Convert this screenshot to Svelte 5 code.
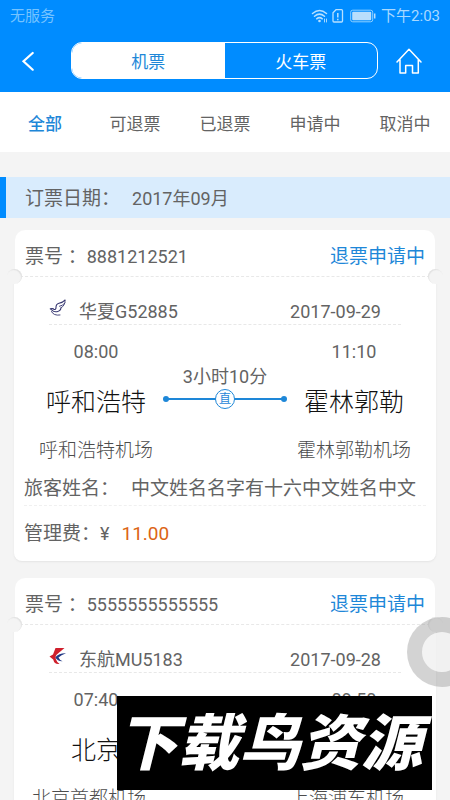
<script>
  let mode = $state('plane');
  let filter = $state('全部');
  const filters = ['全部', '可退票', '已退票', '申请中', '取消中'];
  const tickets = [
    {
      no: '8881212521', status: '退票申请中', logo: 'huaxia', flight: '华夏G52885', date: '2017-09-29',
      from: { time: '08:00', city: '呼和浩特', airport: '呼和浩特机场' },
      to: { time: '11:10', city: '霍林郭勒', airport: '霍林郭勒机场' },
      duration: '3小时10分', passenger: '中文姓名名字有十六中文姓名中文', fee: '11.00'
    },
    {
      no: '5555555555555', status: '退票申请中', logo: 'eastern', flight: '东航MU5183', date: '2017-09-28',
      from: { time: '07:40', city: '北京', airport: '北京首都机场   ' },
      to: { time: '09:50', city: '', airport: '上海浦东机场   ' }
    }
  ];
</script>

{#snippet stop(s)}
  <div class="stop">
    <span class="time">{s.time}</span>
    <span class="city">{s.city}</span>
    <span class="airport">{s.airport}</span>
  </div>
{/snippet}

<div class="app">
  <header>
    <div class="status">
      <span>无服务</span>
      <div class="signals">
        <svg width="18" height="16" viewBox="0 0 18 16" fill="none" stroke="#b8e0ff" stroke-width="1.5" stroke-linecap="round">
          <path d="M1.500 5.500Q8.500 -.5 15.500 5.500M3.500 8.200Q8.500 4 13.500 8.200M5.700 10.800Q8.500 8.500 11.300 10.800" />
          <circle cx="8.500" cy="13" r="1.300" fill="#b8e0ff" stroke="none" />
          <path d="M13.500 11v3M15.500 14v-3" stroke-width=".9" />
        </svg>
        <svg width="12" height="16" viewBox="0 0 12 16" fill="none" stroke="#b8e0ff" stroke-width="1.300">
          <path d="M4 1.700H9.500Q10.500 1.700 10.500 2.700V13Q10.500 14 9.500 14H2Q1 14 1 13V4.700Z" />
          <path d="M5.800 5v4.500M5.800 10.800v1.400" stroke-width="1.500" />
        </svg>
        <svg class="battery" width="26" height="14" viewBox="0 0 26 14">
          <rect x=".7" y="1.200" width="22" height="11.600" rx="2" fill="none" stroke="#8fd0ff" />
          <rect x="2.200" y="2.700" width="19" height="8.600" rx="1" fill="#b9defc" />
          <path d="M24.700 4.500v5" stroke="#b9defc" stroke-width="1.500" />
        </svg>
        <span>下午2:03</span>
      </div>
    </div>
    <div class="nav">
      <button class="icon" aria-label="返回">
        <svg width="14" height="20" viewBox="0 0 14 20" fill="none" stroke="#fff" stroke-width="2.200" stroke-linecap="round"><path d="M11.700 2L2.500 10.300L11.700 18.700" /></svg>
      </button>
      <div class="segment">
        <button class:on={mode === 'plane'} onclick={() => (mode = 'plane')}>机票</button>
        <button class:on={mode === 'train'} onclick={() => (mode = 'train')}>火车票</button>
      </div>
      <button class="icon home" aria-label="首页">
        <svg width="26" height="26" viewBox="0 0 26 26" fill="none" stroke="#fff" stroke-width="1.500" stroke-linejoin="round" stroke-linecap="round"><path d="M1 14L13 1.200L25 14M4 11.500V25H9.700V17.500H16.500V25H22.300V11.500" /></svg>
      </button>
    </div>
  </header>

  <nav class="filters">
    {#each filters as f}
      <button class:on={filter === f} onclick={() => (filter = f)}>{f}</button>
    {/each}
  </nav>

  <main>
    <div class="month"><span class="cjk">订票日期：</span><span>2017年09月</span></div>
    {#each tickets as t}
      <article>
        <div class="head">
          <span class="cjk">票号 ：</span><span>{t.no}</span>
          <a href="#refund">{t.status}</a>
        </div>
        <div class="body">
          <div class="airline">
            {#if t.logo === 'huaxia'}
              <svg width="18" height="18" viewBox="0 0 18 18" fill="none" stroke="#34346f" stroke-linecap="round" stroke-linejoin="round">
                <path d="M16 1.200Q14 3.500 10 4.200Q6.800 5.200 7 8.500Q7 10.800 5 10.500Q4.300 9 1.300 9.800L3 11Q4.500 13.200 8 12.700Q11.700 12 12 8.800" stroke-width="1.100" />
                <path d="M16 1.200Q16.500 6.500 12 8.800M10.500 7.300Q14 6.800 15.800 4M2.500 12.500Q4.500 17 11 16" stroke-width=".9" />
              </svg>
            {:else}
              <svg width="18" height="18" viewBox="0 0 18 18">
                <path d="M6.500 1H15.500L9 6.500Q5.500 9 7 12.500Q8 15.500 10.500 17Q5.500 17.800 4.200 12.500L.5 9.500L4 7.500Z" fill="#cf1f2c" />
                <path d="M17 6.300Q10 6 6.300 10.200Q8.500 14.500 13.500 14.300Q10.500 13 9.500 10.500Q12 8 17 6.300Z" fill="#233a86" />
              </svg>
            {/if}
            <span>{t.flight}</span>
            <time>{t.date}</time>
          </div>
          <div class="route">
            {@render stop(t.from)}
            <div class="leg">
              {#if t.duration}
                <span>{t.duration}</span>
                <div class="line"><i></i><b>直</b><i></i></div>
              {/if}
            </div>
            {@render stop(t.to)}
          </div>
          {#if t.passenger}
            <div class="person"><span>旅客姓名：</span><span>{t.passenger}</span></div>
            <div class="fee"><span class="cjk">管理费：</span><span>¥</span><strong>{t.fee}</strong></div>
          {/if}
        </div>
      </article>
    {/each}
  </main>

  <button class="assist" aria-label="悬浮按钮"></button>
  <div class="banner">下载鸟资源</div>
</div>

<style>
  :global(body) { margin: 0; }
  .app {
    position: relative; height: 100vh; overflow: hidden; background: #f4f4f4; color: #636363;
    font: 18px/26px Roboto, "Noto Sans CJK SC", sans-serif;
  }
  button { border: 0; padding: 0; background: none; font: inherit; color: inherit; }
  svg { display: block; flex: none; }
  header { background: #008cff; color: #fff; padding-bottom: 13px; }
  .status { display: flex; justify-content: space-between; align-items: center; height: 32px; padding: 0 10px; font-size: 15px; color: #a9d9ff; }
  .status > span { color: #75c3ff; }
  .signals { display: flex; align-items: center; gap: 3px; }
  .battery { margin: 0 2px 0 3px; }
  .nav { display: flex; align-items: center; height: 37px; margin-top: 10px; }
  .icon { display: flex; justify-content: center; width: 55px; }
  .nav .home { width: 62px; margin-right: 10px; }
  .segment { flex: 1; display: flex; box-sizing: border-box; height: 37px; margin-left: 16px; border: 1px solid #fff; border-radius: 11px; overflow: hidden; }
  .segment button { flex: 1; padding-top: 3px; font-size: 17px; }
  .segment .on { background: #fff; color: #1e87d8; }
  .filters { display: flex; justify-content: space-between; height: 60px; background: #fff; }
  .filters button { width: 90px; padding-top: 3px; font-size: 17px; }
  .filters .on { color: #1e87d8; font-weight: 500; }
  .cjk { font-size: 19px; }
  .month { display: flex; align-items: center; gap: 12px; box-sizing: border-box; height: 41px; margin: 25px 0 12px; padding: 3px 0 0 19px; border-left: 6px solid #008cff; background: #d9ecfd; }
  article { margin: 0 14px 17px; }
  .head { position: relative; display: flex; align-items: center; height: 47px; margin: 0 1px; padding: 8px 10px 0; box-sizing: border-box; background: #fff; border-radius: 10px 10px 0 0; border-bottom: 1px dashed #e8e8e8; white-space: pre; }
  .head::before, .head::after { content: ""; position: absolute; z-index: 1; bottom: -8px; width: 15px; height: 15px; border-radius: 50%; background: #f4f4f4; }
  .head::before { left: -8px; box-shadow: inset -1px 1px 1px #e2e2e2; }
  .head::after { right: -8px; box-shadow: inset 1px 1px 1px #e2e2e2; }
  .head a { margin-left: auto; color: #1e87d8; font-size: 19px; text-decoration: none; }
  .body { background: #fff; border-radius: 0 0 8px 8px; padding-bottom: 14px; box-shadow: 0 1px 2px #e4e4e4; }
  .airline { display: flex; align-items: center; margin: 0 35px; padding-top: 22px; line-height: 24px; border-bottom: 1px dashed #e8e8e8; }
  .airline svg { margin: 0 12px 7px 0; }
  .airline time { margin: 0 20px 0 auto; }
  .route { display: flex; padding: 14px 15px 0; }
  .stop { flex: 1; display: flex; flex-direction: column; align-items: center; white-space: pre; }
  .city { height: 32px; margin: 22px 0 19px; font-size: 25px; line-height: 32px; font-weight: 300; color: #111; }
  .airport { font-size: 19px; font-weight: 300; color: #4c4c4c; }
  .leg { flex: 0 0 124px; padding-top: 26px; text-align: center; line-height: 24px; }
  .line { display: flex; align-items: center; position: relative; height: 20px; justify-content: space-between; }
  .line::before { content: ""; position: absolute; left: 3px; right: 3px; top: 9px; height: 2px; background: #1e87d8; }
  .line i { width: 6px; height: 6px; border-radius: 50%; background: #1e87d8; }
  .line b { position: relative; box-sizing: border-box; width: 20px; height: 20px; border: 1px solid #1e87d8; border-radius: 50%; background: #fff; color: #1e87d8; font-size: 12px; font-weight: 400; line-height: 18px; }
  .person { display: flex; gap: 12px; margin: 12px 10px 0; padding-bottom: 3px; border-bottom: 1px dashed #f0f0f0; font-size: 19px; white-space: nowrap; }
  .fee { display: flex; margin: 15px 10px 0; }
  .fee strong { margin-left: 12px; color: #dc6414; font-size: 19px; font-weight: 400; }
  .assist { position: absolute; z-index: 2; right: -27px; top: 617px; width: 70px; height: 70px; box-sizing: border-box; border: 15px solid rgb(150 150 150 / .42); border-radius: 50%; background: rgb(240 240 240 / .8); background-clip: padding-box; }
  .banner { position: absolute; z-index: 3; left: 117px; right: 18px; bottom: 10px; height: 94px; background: #000; color: #fff; font-size: 61px; line-height: 96px; font-weight: 900; font-style: italic; white-space: nowrap; }
</style>
